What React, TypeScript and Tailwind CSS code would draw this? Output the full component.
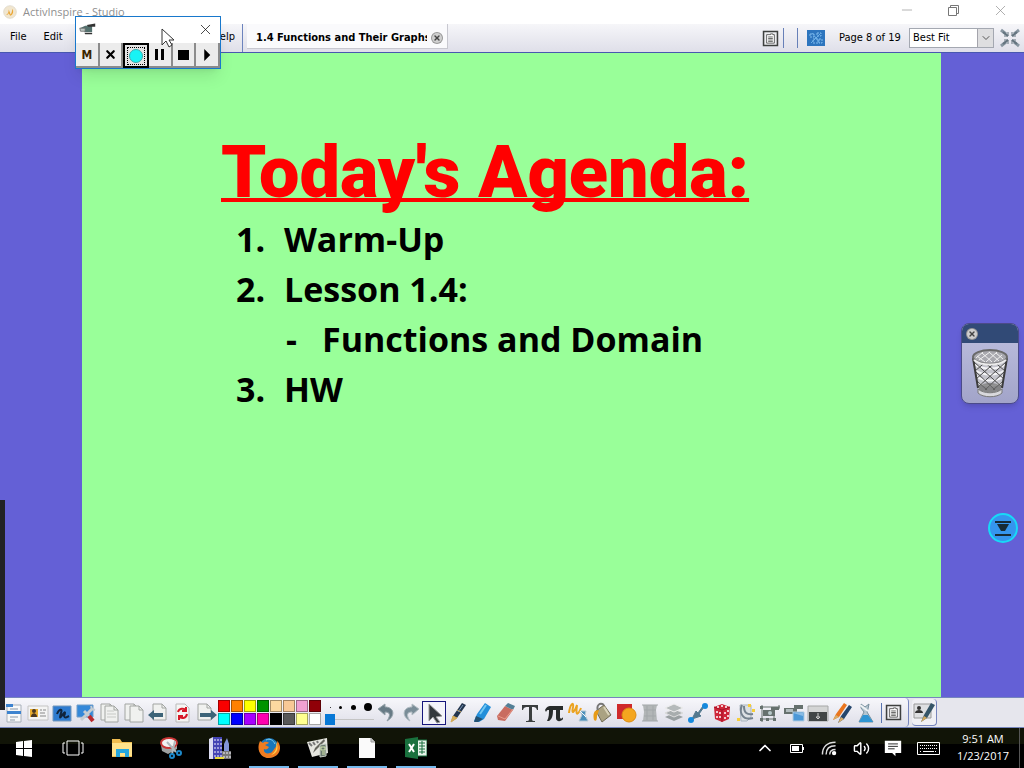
import type { ReactNode } from "react";
import { ChevronDown, ChevronUp, Minus, Volume2, X } from "lucide-react";

type Tool = { label: string; art: ReactNode };

const uiFont = "font-['DejaVu_Sans_Condensed','DejaVu_Sans',sans-serif]";
const systemFont = "font-['Open_Sans','Noto_Sans',sans-serif]";

const swatches = [
  { name: "Red", color: "bg-[#f90000]" },
  { name: "Orange", color: "bg-[#ff8000]" },
  { name: "Yellow", color: "bg-[#ffff00]" },
  { name: "Green", color: "bg-[#009300]" },
  { name: "Cream", color: "bg-[#fcd9a0]" },
  { name: "Peach", color: "bg-[#f8c896]" },
  { name: "Pink", color: "bg-[#f0a0d2]" },
  { name: "Maroon", color: "bg-[#900008]" },
  { name: "Cyan", color: "bg-[#00ffff]" },
  { name: "Blue", color: "bg-[#0000ff]" },
  { name: "Purple", color: "bg-[#a800ff]" },
  { name: "Magenta", color: "bg-[#ff00b0]" },
  { name: "Black", color: "bg-black" },
  { name: "Gray", color: "bg-[#585858]" },
  { name: "Light yellow", color: "bg-[#ffff90]" },
  { name: "White", color: "bg-white" },
];

const penWidths = [
  { name: "Thin", size: "size-px" },
  { name: "Medium", size: "size-[3px]" },
  { name: "Thick", size: "size-[5px]" },
  { name: "Extra thick", size: "size-2" },
];

function Art({ children, className = "size-[22px]" }: { children: ReactNode; className?: string }) {
  return (
    <svg viewBox="0 0 22 22" className={`shrink-0 ${className}`} fill="none" aria-hidden="true">
      {children}
    </svg>
  );
}

const page = (x: number, y: number) => (
  <>
    <path d={`M${x} ${y}h9l4 4v12h-13z`} fill="#f0f1ef" stroke="#a2a5a2" />
    <path d={`M${x + 9} ${y}v4h4`} stroke="#a2a5a2" />
  </>
);

const pageTools: Tool[] = [
  {
    label: "Main menu",
    art: (
      <>
        <path d="M4 3h14v17H4z" fill="#f8f8f8" stroke="#a8b0ba" />
        <path d="M3 2h7v3H3zM4 9h14v3H4z" fill="#3d83cf" />
        <path d="M7 7h8M7 15h8M7 18h5" stroke="#8a98a8" />
      </>
    ),
  },
  {
    label: "Switch profiles",
    art: (
      <>
        <path d="M1 4h20v14H1z" fill="#f4f4f4" stroke="#c4c4c4" />
        <path d="M3 7h8v8H3z" fill="#e9ad31" />
        <circle cx="7" cy="9" r="2" fill="#493722" />
        <path d="M4 15c0-5 6-5 6 0z" fill="#493722" />
        <path d="M13 8h2m1 0h3M13 11h5M13 14h6" stroke="#888" />
      </>
    ),
  },
  {
    label: "Annotate desktop",
    art: (
      <>
        <path d="M2 4h18v15H2z" fill="#2e7bd0" stroke="#7598bc" />
        <path d="M6 12c2-5 6-6 4-1-2 6-1 6 2 1 3-4 2 0 1 2 1 3 3 1 5 0" stroke="#10243e" strokeWidth="2" />
      </>
    ),
  },
  {
    label: "Desktop tools",
    art: (
      <>
        <path d="M2 3h16v12H2z" fill="#3488d9" stroke="#719cc8" />
        <path d="m6 18 11-11M9 9l5 5" stroke="#c6ccd1" strokeWidth="3" />
        <path d="m16 4 1 3 3 1" stroke="#c6ccd1" strokeWidth="2" />
        <path d="m14 14 4 5" stroke="#b9292d" strokeWidth="4" />
      </>
    ),
  },
  {
    label: "Previous flipchart",
    art: (
      <>
        {page(2, 2)}
        {page(6, 4)}
        <path d="M8 9h7M8 12h9M8 15h9" stroke="#c7c9c6" />
      </>
    ),
  },
  {
    label: "Next flipchart",
    art: (
      <>
        {page(2, 2)}
        {page(7, 4)}
      </>
    ),
  },
  {
    label: "Previous page",
    art: (
      <>
        {page(6, 2)}
        <path d="m1 13 6-5v3h9v4H7v3z" fill="#3d6478" />
      </>
    ),
  },
  {
    label: "Reset page",
    art: (
      <>
        <path d="M5 2h9l4 4v14H5z" fill="#f5f5f3" stroke="#bbb" />
        <path d="M7 10c1-4 6-4 8-2m0-3v4h-4M16 12c-1 5-6 5-8 2m0 4v-4h4" stroke="#d71928" strokeWidth="2" />
      </>
    ),
  },
  {
    label: "Next page",
    art: (
      <>
        {page(3, 2)}
        <path d="m22 13-6-5v3H5v4h11v3z" fill="#3d6478" />
      </>
    ),
  },
];

const undoTools: Tool[] = [
  {
    label: "Undo",
    art: <path d="m3 7 7-5v3c9 0 11 9 2 14 4-6 3-9-2-9v3z" fill="#687b86" stroke="#92a0a7" />,
  },
  {
    label: "Redo",
    art: <path d="m20 7-7-5v3C4 5 2 14 11 19c-4-6-3-9 2-9v3z" fill="#7a8d98" stroke="#b1bcc2" />,
  },
];

const drawTools: Tool[] = [
  {
    label: "Pen",
    art: (
      <>
        <path d="m4 20 2-6L15 1l4 2-9 13z" fill="#24364f" />
        <path d="m4 20 2-6 4 2zM10 8l4 2" fill="#d6ad5a" stroke="#d6ad5a" />
        <path d="m16 3-5 7" stroke="#7793b5" />
      </>
    ),
  },
  {
    label: "Highlighter",
    art: (
      <>
        <path d="m3 19 3-7 8-11 6 4-7 12-5 3z" fill="#238fda" />
        <path d="m5 14 7 3-5 3H3z" fill="#245172" />
        <path d="m15 3-6 9" stroke="#72c8f3" strokeWidth="2" />
      </>
    ),
  },
  {
    label: "Eraser",
    art: (
      <>
        <path d="m2 14 8-10 8 4-8 11-7-1z" fill="#c96c60" />
        <path d="m10 4 3-3 7 3-2 4z" fill="#537f96" />
        <path d="m3 14 7 3 8-10" stroke="#e99b8a" />
      </>
    ),
  },
  {
    label: "Text",
    art: <path d="M3 3h16v5h-1c-1-3-2-3-5-3v12c0 2 1 2 3 2v1H7v-1c2 0 3 0 3-2V5C6 5 5 5 4 8H3z" fill="#3b3f40" />,
  },
  {
    label: "Equation editor",
    art: <path d="M2 8c2-4 4-4 7-4h11v4h-3v7c0 2 2 2 3 0v2c-2 3-7 3-7-1V8h-3c0 6-1 9-4 11H4c2-4 2-7 2-11-2 0-2 0-3 2z" fill="#272b2b" />,
  },
  {
    label: "Handwriting recognition",
    art: (
      <>
        <path d="M2 11c1-9 5-12 4-6-2 9 2 4 4-2-2 14 2 8 4 3" stroke="#eba321" strokeWidth="2" />
        <path d="M13 9h6l-1 4 3 6h-9l3-6z" fill="#498ebb" stroke="#b7c9d4" />
        <path d="m13 9 6 6" stroke="#f6f8fa" />
      </>
    ),
  },
  {
    label: "Fill",
    art: (
      <>
        <path d="m5 9 8-6 7 10-9 7z" fill="#aaa282" stroke="#716b55" />
        <path d="M7 9c-2-6 2-9 6-6" stroke="#777" strokeWidth="2" />
        <path d="m13 5 5 8" stroke="#d8d2b8" strokeWidth="2" />
        <path d="M8 8c-6 0-6 5-5 10 2 2 3 0 3-4z" fill="#e89b16" />
      </>
    ),
  },
  {
    label: "Shape",
    art: (
      <>
        <path d="M2 2h15v15H2z" fill="#cf292b" />
        <circle cx="14" cy="13" r="7" fill="#f4a61f" stroke="#dd8c11" />
      </>
    ),
  },
  {
    label: "Grid",
    art: (
      <>
        <path d="M4 3h14l-1 5 1 11H4l1-9z" fill="#b2b6b7" />
        <path d="M3 3h16M3 19h16M5 8h12M5 14h12M8 4v14M14 4v14" stroke="#a2a7a9" />
      </>
    ),
  },
  {
    label: "Layers",
    art: (
      <>
        <path d="m2 15 9-4 9 4-9 4z" fill="#999fa1" />
        <path d="m2 11 9-4 9 4-9 4z" fill="#a8adae" stroke="#ddd" />
        <path d="m2 6 9-4 9 4-9 4z" fill="#b5babb" stroke="#eee" />
      </>
    ),
  },
  {
    label: "Connector",
    art: (
      <>
        <path d="m5 17 4-8 2 2 5-7 1 1-5 7 2 2z" fill="#54798f" stroke="#54798f" />
        <circle cx="4" cy="18" r="3" fill="#1689dc" />
        <circle cx="18" cy="4" r="3" fill="#1689dc" />
      </>
    ),
  },
  {
    label: "Dice roller",
    art: (
      <>
        <path d="m3 5 8-3 8 3-1 12-7 3-7-3z" fill="#ce2639" />
        <path d="m3 5 8 3 8-3M11 8v12" stroke="#a51126" />
        {[[7, 5], [11, 4], [15, 5], [6, 10], [9, 15], [6, 15], [9, 11], [14, 11], [17, 9], [14, 16], [17, 14]].map(
          ([x, y]) => (
            <circle key={`${x}-${y}`} cx={x} cy={y} r="1" fill="#fff" />
          ),
        )}
      </>
    ),
  },
  {
    label: "Math tools",
    art: (
      <>
        <path d="M5 3h11v12l-4 4H6z" fill="#dce0e4" stroke="#a9b4bf" />
        <path d="M7 3c-3 7 0 16 11 13M9 4c0 7 3 9 9 8" stroke="#75828e" strokeWidth="2" />
        <path d="M13 2h3v3h-3zM2 16h3v3H2zM17 7h3v3h-3z" fill="#f7ce39" />
      </>
    ),
  },
  {
    label: "Camera area",
    art: (
      <>
        <path d="M1 5h20M1 17h16M3 3v17M15 5v14M20 3v4" stroke="#64706d" />
        <path d="M4 8h12v6H4zM12 5h8v3h-8zM1 4h3v3H1zM1 16h3v3H1zM14 16h3v3h-3zM7 16h3v3H7z" fill="#66716e" />
        <circle cx="11" cy="11" r="2" fill="#b9c9ca" />
      </>
    ),
  },
  {
    label: "Camera screen",
    art: (
      <>
        <path d="M1 6h13v6H1zM11 3h9v4h-9z" fill="#66716e" />
        <path d="M3 7h7v3H3z" fill="#b1bcbd" />
        <path d="M10 10h11v9H10z" fill="#4c98d7" stroke="#b1cce0" />
        <path d="M10 11h10v3z" fill="#89bce5" />
      </>
    ),
  },
  {
    label: "Revealer",
    art: (
      <>
        <path d="M1 4h20v15H1z" fill="#d4d5d5" stroke="#a6a8a8" />
        <path d="M2 10h18v9H2z" fill="#424647" />
        <path d="M11 11v4m-2 0h4l-2 2z" stroke="#ccc" />
      </>
    ),
  },
  {
    label: "Dual user",
    art: (
      <>
        <path d="m2 18 3-6L13 1l3 2-8 12z" fill="#e9751f" />
        <path d="m7 21 3-7 8-11 3 2-8 12z" fill="#25466c" />
        <path d="m2 18 3-5 3 2zM7 21l3-6 3 2z" fill="#d8ad67" />
      </>
    ),
  },
  {
    label: "Clear",
    art: (
      <>
        <path d="m6 2 4 3 4-3-1 5-1 3 6 10H4l5-10-3-4z" fill="#b5c6d1" stroke="#78909e" />
        <path d="m8 13-4 7h14l-5-7z" fill="#2e94d2" />
        <path d="m5 3 8 6" stroke="#eef2f4" strokeWidth="2" />
      </>
    ),
  },
];

const notes = (
  <>
    <path d="M2 2h18v18H2z" fill="#ededf0" stroke="#3e403f" strokeWidth="2" />
    <path d="M6 6h5v-1h3v1h2v11H6z" fill="#fff" stroke="#3e403f" />
    <path d="M8 9h6M8 11h6M8 13h6M8 15h6" stroke="#3e403f" />
  </>
);

function ToolButton({ tool, active = false }: { tool: Tool; active?: boolean }) {
  return (
    <button
      type="button"
      aria-label={tool.label}
      className={`flex h-6 w-6 shrink-0 items-center justify-center ${active ? "border border-[#16167c] bg-[#f4f4fa]" : ""}`}
    >
      <Art>{tool.art}</Art>
    </button>
  );
}

function CloseBadge({ label }: { label: string }) {
  return (
    <button
      type="button"
      aria-label={label}
      className="flex size-[10px] shrink-0 items-center justify-center rounded-full bg-[#cfcfcf] text-[#444] ring-1 ring-[#989898]"
    >
      <X size={8} strokeWidth={4} />
    </button>
  );
}

function TitleBar() {
  return (
    <header className={`flex h-6 items-center bg-white text-[#8f8f8f] ${systemFont}`}>
      <Art className="ml-[3px] size-[14px]">
        <circle cx="11" cy="11" r="10" fill="#f1e6cf" stroke="#d9d3c5" />
        <path d="M5 15c3-1 4-4 4-8l3 8c2-2 2-6 3-9 2 4 1 9-3 11-2-1-2-3-3-4-1 2-2 3-4 2z" fill="#eaa634" />
      </Art>
      <h1 className="ml-[6px] text-[11px] leading-4">ActivInspire - Studio</h1>
      <div className="ml-auto flex h-full items-center pb-1">
        <button type="button" aria-label="Minimize" className="flex w-[46px] justify-center">
          <Minus size={16} strokeWidth={1} />
        </button>
        <button type="button" aria-label="Restore" className="flex w-[46px] justify-center">
          <svg viewBox="0 0 11 11" className="size-[11px]" fill="none" stroke="#777" aria-hidden="true">
            <path d="M.5 2.5h8v8h-8zM2.5 2.5v-2h8v8h-2" />
          </svg>
        </button>
        <button type="button" aria-label="Close" className="flex w-12 justify-center">
          <X size={17} strokeWidth={1} />
        </button>
      </div>
    </header>
  );
}

function MenuBar() {
  return (
    <nav className={`flex h-[29px] items-stretch border-b border-[#4858b0] bg-linear-to-b from-[#f6f6f9] to-[#dfdfe9] text-[11px] text-black ${uiFont}`}>
      <div className="flex w-[243px] items-center gap-[17px] border-r border-[#6c83bd] pb-px pr-[7px] pl-[10px]">
        <button type="button">File</button>
        <button type="button">Edit</button>
        <button type="button" className="ml-auto">Help</button>
      </div>
      <div className="ml-1 flex h-[25px] w-[201px] items-center gap-[5px] border-r border-b border-[#c8c8d0] bg-[#fafafc] pt-1 pr-[5px] pl-[9px]">
        <span className="min-w-0 flex-1 overflow-hidden font-bold whitespace-nowrap">1.4 Functions and Their Graphs</span>
        <CloseBadge label="Close flipchart" />
      </div>
      <div className="ml-auto flex items-center pr-1">
        <button type="button" aria-label="Page notes">
          <Art className="size-[17px]">{notes}</Art>
        </button>
        <span className="ml-1 h-5 w-[15px] border-x border-[#6780b8]" />
        <button type="button" aria-label="Desktop overlay" className="ml-[9px]">
          <svg viewBox="0 0 18 16" className="h-4 w-[18px]" fill="none" aria-hidden="true">
            <path d="M0 0h18v16H0z" fill="#2d75be" />
            <path d="M3 4h4v3H3zM10 3h4v3h-4zM6 9h5v4H6zM12 9h3v4h-3z" stroke="#80bced" strokeDasharray="2 1" />
            <path d="m5 3 8 10M13 4 4 13" stroke="#6db0e8" />
          </svg>
        </button>
        <span className="ml-[14px] w-[70px] whitespace-nowrap">Page 8 of 19</span>
        <div className="relative h-5 w-[85px]">
          <select aria-label="Page zoom" defaultValue="fit" className="h-full w-full appearance-none border border-[#a4a8b1] bg-white pl-[3px]">
            <option value="fit">Best Fit</option>
          </select>
          <span className="pointer-events-none absolute inset-y-px right-px flex w-4 items-center justify-center border-l border-[#a4a4ac] bg-[#dedee0]">
            <ChevronDown size={12} strokeWidth={2} className="text-[#555]" />
          </span>
        </div>
        <button type="button" aria-label="Full screen" className="ml-[6px]">
          <svg viewBox="0 0 20 20" className="size-5" fill="none" stroke="#64747f" aria-hidden="true">
            <path d="m1 2 5 4m8 8 5 4M19 2l-5 4M6 14l-5 4" strokeWidth="3" stroke="#8795a0" />
            <path d="m3 4 5 4m4 4 5 4M17 4l-5 4m-4 4-5 4" strokeWidth="2" />
            <path d="M4 8h4V4M16 8h-4V4M4 12h4v4M16 12h-4v4" />
          </svg>
        </button>
      </div>
    </nav>
  );
}

function Flipchart() {
  return (
    <main className="relative flex min-h-0 flex-1 bg-[#6460d6]">
      <article className="mr-[83px] ml-[82px] flex-1 overflow-hidden bg-[#99ff99] pt-[82px] pl-[139px]">
        <h2 className="font-['Roboto',sans-serif] text-[72px] leading-[76px] font-black whitespace-nowrap text-[#ff0000] underline decoration-4 underline-offset-1 [text-decoration-skip-ink:none]">
          Today&apos;s Agenda:
        </h2>
        <ol className="mt-[3px] ml-[15px] font-['Open_Sans',sans-serif] text-[34px] leading-[50px] font-bold whitespace-nowrap text-black">
          <li className="flex"><span className="w-12">1.</span>Warm-Up</li>
          <li className="flex">
            <span className="w-12">2.</span>
            <div>
              Lesson 1.4:
              <p className="flex"><span className="ml-[2px] w-9">-</span>Functions and Domain</p>
            </div>
          </li>
          <li className="flex"><span className="w-12">3.</span>HW</li>
        </ol>
      </article>

      <aside className="absolute top-[270px] right-[5px] flex h-[81px] w-[58px] flex-col overflow-hidden rounded-lg border border-[#4b4b89] bg-linear-to-b from-[#bec0df] to-[#a2a4c9] shadow-md">
        <div className="flex h-[19px] items-center bg-[#314a76] pl-[5px]">
          <CloseBadge label="Close trash" />
        </div>
        <Basket />
      </aside>

      <button type="button" aria-label="Show toolbar" className="absolute top-[460px] right-[6px] size-[30px]">
        <svg viewBox="0 0 30 30" fill="none" aria-hidden="true">
          <circle cx="15" cy="15" r="14" fill="#3595ee" stroke="#18d9f7" strokeWidth="2" />
          <path d="M7 9h16M7 22h16" stroke="#172b37" strokeWidth="2" />
          <path d="M9 11h12l-4 7h-4z" fill="#172b37" />
        </svg>
      </button>
    </main>
  );
}

function Basket() {
  return (
    <svg viewBox="0 0 56 60" className="min-h-0 flex-1" fill="none" aria-hidden="true">
      <path d="m11 14 5 33c4 5 20 5 24 0l5-33" fill="#c5c5cd" />
      <path d="M12 21c8 6 24 6 32 0M13 27c8 6 22 6 30 0M14 33c7 6 21 6 28 0M15 39c7 5 19 5 26 0" stroke="#f4f4f6" strokeWidth="2" />
      <path d="m12 19 28 25M20 17l22 19M30 17l13 11M13 28l20 19M15 38l10 9M44 19 16 44M36 17 14 36M26 17 13 28M43 28 23 47M41 38l-10 9" stroke="#4c4c4c" />
      <path d="m11 15 5 30M45 15l-5 30" stroke="#3c3c3c" strokeWidth="2" />
      <ellipse cx="28" cy="14" rx="17" ry="7" fill="#a8a8ae" />
      <path d="m15 13 8 6M20 10l10 9M27 9l10 9M34 10l7 6M40 12l-8 7M35 9l-11 10M28 9l-11 8M21 9l-7 6" stroke="#f0f0f0" />
      <ellipse cx="28" cy="14" rx="17" ry="7" stroke="#6a6a6a" strokeWidth="2" />
      <path d="M12 17c7 6 25 6 32 0" stroke="#ececec" strokeWidth="2" />
      <path d="M17 43c5-4 17-4 22 0v4c-5 3-17 3-22 0z" fill="#6a6a6a" fillOpacity=".7" />
      <path d="M16 46c6 5 18 5 24 0v4c-5 5-19 5-24 0z" fill="#d8d8dc" stroke="#777" />
    </svg>
  );
}

function Toolbar() {
  return (
    <div className="flex h-[31px] items-center border-y border-[#7685bd] bg-[#e6e6ed]">
      <div className="flex h-full items-center rounded-r border-r border-[#7685bd] bg-linear-to-b from-[#f7f7fb] to-[#dedee8] pl-[2px]">
        {pageTools.map((tool) => <ToolButton key={tool.label} tool={tool} />)}
        <div className="grid grid-cols-8 gap-px">
          {swatches.map(({ name, color }) => (
            <button key={name} type="button" aria-label={name} className={`size-3 border border-black/35 ${color}`} />
          ))}
        </div>
        <div className="ml-1 flex h-[25px] w-[49px] flex-col">
          <div className="flex h-[14px] items-center justify-between pr-[2px] pl-[5px]">
            {penWidths.map(({ name, size }) => (
              <button key={name} type="button" aria-label={name} className={`rounded-full bg-black ${size}`} />
            ))}
          </div>
          <input type="range" aria-label="Pen width" min="1" max="100" defaultValue="1" className="h-[11px] w-full appearance-none bg-linear-to-b from-transparent from-45% via-[#c4c4c4] via-50% to-transparent to-55% [&::-webkit-slider-thumb]:h-[11px] [&::-webkit-slider-thumb]:w-[10px] [&::-webkit-slider-thumb]:appearance-none [&::-webkit-slider-thumb]:bg-[#0878d6]" />
        </div>
        {undoTools.map((tool) => <ToolButton key={tool.label} tool={tool} />)}
        <ToolButton
          active
          tool={{ label: "Select", art: <path d="m6 2 13 12-6 1 4 5-3 1-4-6-4 4z" fill="#33383c" stroke="#999" /> }}
        />
        {drawTools.map((tool) => <ToolButton key={tool.label} tool={tool} />)}
        <span className="ml-[3px] h-5 w-px bg-[#5874af]" />
        <button type="button" aria-label="Notes" className="mr-[6px] ml-[3px]">
          <Art className="size-[17px]">{notes}</Art>
        </button>
      </div>
      <button type="button" aria-label="Profile tools" className="ml-[3px] flex h-[27px] w-[25px] items-center justify-center rounded border-r border-b border-[#7685bd] bg-[#f0f0f5]">
        <Art>
          <path d="M1 3h17v14H1z" fill="#dedfe2" stroke="#999" />
          <circle cx="6" cy="7" r="2" fill="#333" />
          <path d="M2 12c0-4 8-4 8 0z" fill="#333" />
          <path d="m8 21 3-7 7-12 4 2-8 13z" fill="#365568" />
          <path d="m8 21 3-6 3 2z" fill="#d4a85b" />
        </Art>
      </button>
    </div>
  );
}

const apps: Array<Tool & { running?: boolean }> = [
  {
    label: "Start",
    art: <path d="m3 5 7-1v7H3zm8-1 8-1v8h-8zM3 12h7v7l-7-1zm8 0h8v8l-8-1z" fill="#fff" />,
  },
  {
    label: "Task View",
    art: <path d="M5 4h12v14H5zM3 6H1v10h2M19 6h2v10h-2" stroke="#fff" />,
  },
  {
    label: "File Explorer",
    art: (
      <>
        <path d="M1 2h8l2 3h10v15H1z" fill="#f0bd50" />
        <path d="M1 6h20v13H1z" fill="#ffe28b" />
        <path d="M5 12h13v8h-4v-4H9v4H5z" fill="#26a7df" />
      </>
    ),
  },
  {
    label: "Snipping Tool",
    art: (
      <>
        <path d="m1 8 1 6 6 3 9-5V6z" fill="#9ea1a1" />
        <ellipse cx="9" cy="6" rx="8" ry="5" fill="#f2f2f2" stroke="#c83535" strokeWidth="2" />
        <path d="m7 5 9 10M15 4l-3 13" stroke="#aeb8bc" strokeWidth="2" />
        <circle cx="12" cy="19" r="2" stroke="#1d89ca" strokeWidth="2" />
        <circle cx="19" cy="16" r="2" stroke="#1d89ca" strokeWidth="2" />
      </>
    ),
  },
  {
    label: "Campus",
    art: (
      <>
        <path d="m0 2 4-2v22H0z" fill="#dcdcf2" />
        <path d="M4 0h9v22H4z" fill="#4444b4" />
        <path d="m15 7 3-6 2 6v10h-5z" fill="#8294d8" />
        <path d="M13 14h10v8H13z" fill="#777" />
        <path d="M6 2v19M9 2v19M12 2v19M15 15v6M18 15v6M21 15v6" stroke="#f4f4ff" strokeDasharray="2 2" />
        <path d="M6 20h9v2H6z" fill="#e9da38" />
      </>
    ),
  },
  {
    label: "Firefox",
    running: true,
    art: (
      <>
        <circle cx="11" cy="11" r="10" fill="#1976bc" />
        <path d="M2 4C-4 17 9 26 19 18c5-5 3-12 0-14 1 5-3 8-5 11-4 3-9 1-8-3 2 1 4 0 5-2L7 8l4-2C8 4 6 5 5 6z" fill="#ef7c20" />
        <path d="M17 4c4 7-1 12-4 14 6-1 9-8 4-14z" fill="#ffd04a" />
        <path d="M8 3c4-2 7 0 9 4" stroke="#7bd0f0" />
      </>
    ),
  },
  {
    label: "ActivInspire",
    running: true,
    art: (
      <>
        <path d="m0 5 20-4 1 15-16 4z" fill="#e6e6e0" />
        <path d="m6 16 2-5 9-9 1 2-8 8z" fill="#66665f" />
        <path d="m13 8 6-1v12l-6 1z" fill="#69786f" stroke="#c7cfc5" />
        <path d="M14 10h4v3h-4zM15 15h3M15 17h3" stroke="#d6e8b0" />
        <path d="m2 6 3 3M6 5l2 3M10 4l1 2" stroke="#777" strokeWidth="2" />
      </>
    ),
  },
  {
    label: "Document",
    running: true,
    art: (
      <>
        <path d="M3 1h12l4 4v16H3z" fill="#fafafa" />
        <path d="M15 1v4h4" fill="#ccc" stroke="#999" />
      </>
    ),
  },
  {
    label: "Excel",
    running: true,
    art: (
      <>
        <path d="M12 3h10v16H12z" fill="#e9f4ec" stroke="#19713e" />
        <path d="M14 6h6M14 9h6M14 12h6M14 15h6M17 4v13" stroke="#19713e" />
        <path d="m0 2 13-2v22L0 20z" fill="#19713e" />
        <path d="m4 7 5 8M9 7l-5 8" stroke="#fff" strokeWidth="2" />
      </>
    ),
  },
];

function Taskbar() {
  return (
    <footer className={`flex h-10 items-stretch bg-linear-to-b from-[#111407] from-40% to-black to-40% text-white ${systemFont}`}>
      <div className="flex gap-px">
        {apps.map(({ label, art, running }) => (
          <button key={label} type="button" aria-label={label} className="flex w-12 flex-col items-center pt-[9px]">
            <Art>{art}</Art>
            {running && <span className="mt-auto h-[2px] w-10 bg-[#76b9ed]" />}
          </button>
        ))}
      </div>
      <div className="ml-auto flex items-center">
        <button type="button" aria-label="Show hidden icons" className="flex w-8 justify-center"><ChevronUp size={20} strokeWidth={2} /></button>
        <button type="button" aria-label="Battery" className="flex w-8 justify-center">
          <svg viewBox="0 0 15 9" className="h-[9px] w-[15px]" fill="none" aria-hidden="true">
            <path d="M.5.5h12v8H.5zM13.5 3v3" stroke="#fff" />
            <path d="M2 2h7v5H2z" fill="#fff" />
          </svg>
        </button>
        <button type="button" aria-label="Network" className="flex w-8 justify-center">
          <Art className="size-4">
            <path d="M2 20C2 9 9 3 20 3M7 20C7 12 12 8 20 8M12 20c0-5 3-7 8-7" stroke="#ddd" strokeWidth="2" />
            <circle cx="18" cy="18" r="3" fill="#fff" />
          </Art>
        </button>
        <button type="button" aria-label="Volume" className="flex w-8 justify-center"><Volume2 size={17} strokeWidth={2} /></button>
        <button type="button" aria-label="Action Center" className="flex w-8 justify-center">
          <Art className="size-[18px]">
            <path d="M1 2h20v15H14v4l-4-4H1z" fill="#fff" />
            <path d="M5 6h12M5 9h12M5 12h8" stroke="#000" strokeWidth="1" />
          </Art>
        </button>
        <button type="button" aria-label="Touch keyboard" className="flex w-[38px] justify-center">
          <svg viewBox="0 0 23 13" className="h-[13px] w-[23px]" fill="none" stroke="#fff" aria-hidden="true">
            <path d="M.5.5h22v12H.5zM6 9.5h11" />
            <path d="M3 3.5h17M3 6.5h17M3 9.5h2M18 9.5h2" strokeDasharray="1 1" />
          </svg>
        </button>
        <time dateTime="2017-01-23T09:51" className="w-[72px] pb-[3px] text-center text-[11px] leading-[17px]">
          <span className="block">9:51 AM</span>
          <span className="block">1/23/2017</span>
        </time>
        <button type="button" aria-label="Show desktop" className="h-full w-[5px] border-l border-[#555]" />
      </div>
    </footer>
  );
}

const recorderButton = "flex flex-1 items-center justify-center border-r-2 border-b-2 border-r-[#8c8c8c] border-b-[#8c8c8c] bg-[#ececec]";

function Recorder() {
  return (
    <section aria-label="Screen recorder" className="absolute top-4 left-[75px] flex h-[53px] w-[146px] flex-col border border-[#1878cc] bg-white shadow-lg">
      <div className="flex flex-1 items-center justify-between pr-[6px] pl-[3px]">
        <Art className="size-[17px]">
          <path d="M1 8 8 5h9v8H8z" fill="#54716e" />
          <path d="m10 4 11-2v4h-9zM7 14h10v2H8z" fill="#333" />
          <path d="M1 8h7v4H2z" fill="#bdc9c5" stroke="#666" />
        </Art>
        <button type="button" aria-label="Close recorder" className="pb-px"><X size={17} strokeWidth={1} className="text-black" /></button>
      </div>
      <div className="flex h-[25px] text-black">
        <button type="button" aria-label="Menu" className={recorderButton}>
          <span className={`text-[12px] font-bold text-[#3b2500] ${uiFont}`}>M</span>
        </button>
        <button type="button" aria-label="Cancel" className={recorderButton}><X size={13} strokeWidth={4} /></button>
        <button type="button" aria-label="Record" className="flex flex-1 items-center justify-center border-2 border-black bg-[#e4e4e4]">
          <span className="flex size-[18px] items-center justify-center border border-dotted border-black">
            <span className="size-[14px] rounded-full border border-[#3da9ab] bg-[#18f3f5]" />
          </span>
        </button>
        <button type="button" aria-label="Pause" className={recorderButton}>
          <span className="h-[11px] w-[9px] border-x-3 border-black" />
        </button>
        <button type="button" aria-label="Stop" className={recorderButton}><span className="h-[10px] w-[11px] bg-black" /></button>
        <button type="button" aria-label="Play" className={recorderButton}>
          <Art className="size-3"><path d="m6 0 11 11L6 22z" fill="#000" /></Art>
        </button>
      </div>
    </section>
  );
}

export default function App() {
  return (
    <div className="relative flex h-screen flex-col overflow-hidden">
      <TitleBar />
      <MenuBar />
      <Flipchart />
      <Toolbar />
      <Taskbar />
      <div className="absolute bottom-[58px] left-0 h-[210px] w-[5px] bg-[#222226]" />
      <Recorder />
      <svg viewBox="0 0 14 20" className="pointer-events-none absolute top-7 left-[161px] h-5 w-[14px]" aria-hidden="true">
        <path d="M1 1v16l4-4 3 6 3-2-3-5h5z" fill="#fff" stroke="#333" />
      </svg>
    </div>
  );
}
